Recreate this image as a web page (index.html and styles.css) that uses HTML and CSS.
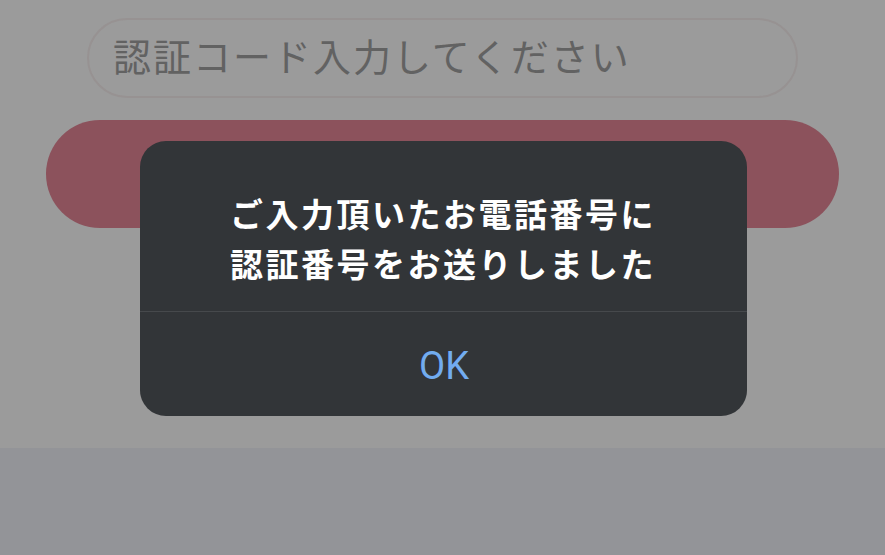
FILE: index.html
```html
<!DOCTYPE html>
<html lang="ja">
<head>
    <meta charset="UTF-8">
    <meta name="viewport" content="width=device-width, initial-scale=1.0">
    <title>認証コード入力</title>
    <link rel="stylesheet" href="styles.css">
</head>
<body>

    <div class="page">
        <div class="form">
            <input class="code-input" type="text" placeholder="認証コード入力してください">
            <button class="submit-button"></button>
        </div>
        <div class="bottom-area"></div>
    </div>

    <div class="overlay">
        <div class="alert">
            <p class="alert-message">ご入力頂いたお電話番号に<br>認証番号をお送りしました</p>
            <button class="alert-ok">OK</button>
        </div>
    </div>

</body>
</html>
```

FILE: styles.css
```css
/* page */
body {
    margin: 0;
    font-family: "Noto Sans CJK JP", sans-serif;
    background-color: #9b9b9b;
}
.page {
    height: 555px;
    display: flex;
    flex-direction: column;
}
.form {
    height: 448px;
    display: flex;
    flex-direction: column;
    align-items: center;
}
.code-input {
    box-sizing: border-box;
    width: 711px;
    height: 80px;
    margin-top: 18px;
    padding: 0 0 8px 24px;
    border: 2px solid #979292;
    border-radius: 40px;
    background-color: #9b9b9b;
    font-family: "Noto Sans CJK JP", sans-serif;
    font-size: 38px;
    letter-spacing: 2px;
    outline: none;
}
.code-input::placeholder {
    color: #626262;
}
.submit-button {
    width: 793px;
    height: 108px;
    margin-top: 22px;
    border: none;
    border-radius: 54px;
    background-color: #8c525c;
}
.bottom-area {
    flex: 1;
    background-color: #939498;
}

/* alert dialog */
.overlay {
    position: fixed;
    top: 141px;
    left: 0;
    right: 0;
    display: flex;
    justify-content: center;
}
.alert {
    width: 607px;
    height: 275px;
    margin-left: 1px;
    display: flex;
    flex-direction: column;
    border-radius: 26px;
    background-color: #323538;
}
.alert-message {
    margin: 0;
    padding: 47px 20px 23px;
    border-bottom: 1px solid #46494c;
    color: #fff;
    font-size: 33px;
    font-weight: bold;
    line-height: 50px;
    letter-spacing: 2.5px;
    text-align: center;
}
.alert-ok {
    flex: 1;
    border: none;
    background: none;
    color: #72acf0;
    font-family: Roboto, sans-serif;
    font-size: 38px;
    padding: 4px 0 0 2px;
    cursor: pointer;
}
```
